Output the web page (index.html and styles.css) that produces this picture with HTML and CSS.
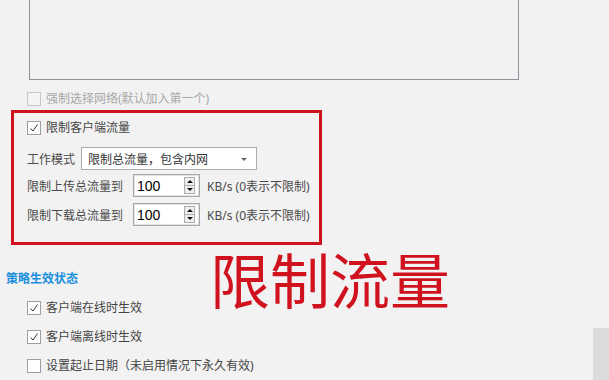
FILE: index.html
```html
<!DOCTYPE html>
<html lang="zh-CN">
<head>
<meta charset="utf-8">
<link rel="stylesheet" href="styles.css">
</head>
<body>
<div class="page">
  <div class="top-box"></div>

  <div class="opt opt-disabled">
    <span class="cb cb-disabled"></span>
    <span>强制选择网络(默认加入第一个)</span>
  </div>

  <div class="redbox">
    <div class="opt">
      <span class="cb"><svg viewBox="0 0 14 14" width="14" height="14"><polyline points="3.5,7.5 6,10 10.5,3.5" fill="none" stroke="#333" stroke-width="1"/></svg></span>
      <span>限制客户端流量</span>
    </div>
    <div class="field field-mode">
      <span class="lbl lbl-mode">工作模式</span>
      <div class="select">
        <span>限制总流量，包含内网</span>
        <span class="caret"></span>
      </div>
    </div>
    <div class="field field-up">
      <span class="lbl lbl-long">限制上传总流量到</span>
      <div class="spin">
        <span class="spin-val">100</span>
        <span class="spin-btns"><span class="sb sb-up"><i class="tri-up"></i></span><span class="sb"><i class="tri-down"></i></span></span>
      </div>
      <span class="unit">KB/s (0表示不限制)</span>
    </div>
    <div class="field field-down">
      <span class="lbl lbl-long">限制下载总流量到</span>
      <div class="spin">
        <span class="spin-val">100</span>
        <span class="spin-btns"><span class="sb sb-up"><i class="tri-up"></i></span><span class="sb"><i class="tri-down"></i></span></span>
      </div>
      <span class="unit">KB/s (0表示不限制)</span>
    </div>
  </div>

  <div class="section-title">策略生效状态</div>

  <div class="opt opt-row">
    <span class="cb"><svg viewBox="0 0 14 14" width="14" height="14"><polyline points="3.5,7.5 6,10 10.5,3.5" fill="none" stroke="#333" stroke-width="1"/></svg></span>
    <span>客户端在线时生效</span>
  </div>
  <div class="opt opt-row">
    <span class="cb"><svg viewBox="0 0 14 14" width="14" height="14"><polyline points="3.5,7.5 6,10 10.5,3.5" fill="none" stroke="#333" stroke-width="1"/></svg></span>
    <span>客户端离线时生效</span>
  </div>
  <div class="opt opt-row">
    <span class="cb"></span>
    <span>设置起止日期（未启用情况下永久有效)</span>
  </div>

  <div class="annotation">限制流量</div>
  <div class="scroll-thumb"></div>
</div>
</body>
</html>
```

FILE: styles.css
```css
html, body {
  margin: 0;
  padding: 0;
  background: #f2f2f2;
}
body {
  font-family: "Noto Sans", "Noto Sans CJK SC", sans-serif;
  font-size: 12px;
  color: #444;
  width: 609px;
  height: 380px;
  overflow: hidden;
}
.page {
  position: relative;
  width: 609px;
  height: 380px;
}
.top-box {
  margin-left: 29px;
  width: 490px;
  height: 80px;
  box-sizing: border-box;
  border: 1px solid #8d9199;
  border-top: 0;
}
.opt {
  display: flex;
  align-items: center;
  gap: 5px;
  height: 14px;
  line-height: 14px;
  padding-left: 27px;
  white-space: nowrap;
}
.opt-disabled {
  margin-top: 12px;
  color: #a8a8a8;
}
.cb {
  display: block;
  width: 14px;
  height: 14px;
  box-sizing: border-box;
  border: 1px solid #9f9f9f;
  background: #fff;
  flex: none;
  position: relative;
}
.cb svg {
  position: absolute;
  left: -1px;
  top: -1px;
}
.cb-disabled {
  border-color: #c6c6c6;
  background: #f4f4f4;
}
.redbox {
  margin-top: 4px;
  margin-left: 11px;
  width: 311px;
  height: 135px;
  box-sizing: border-box;
  border: 3px solid #d0121f;
  padding-top: 8px;
}
.redbox .opt {
  padding-left: 13px;
}
.field {
  display: flex;
  align-items: center;
  padding-left: 13px;
  height: 23px;
  white-space: nowrap;
}
.field-mode { margin-top: 12px; }
.field-up { margin-top: 4px; }
.field-down { margin-top: 6px; }
.lbl { color: #4a4a4a; }
.lbl-mode { margin-right: 6px; }
.lbl-long { margin-right: 10px; }
.select {
  width: 176px;
  height: 23px;
  box-sizing: border-box;
  border: 1px solid #acacac;
  background: #fff;
  display: flex;
  align-items: center;
  justify-content: space-between;
  padding: 0 6px 0 6px;
  color: #333;
}
.caret {
  width: 0;
  height: 0;
  border-left: 3px solid transparent;
  border-right: 3px solid transparent;
  border-top: 3px solid #666;
  margin-right: 3px;
  margin-top: 1px;
}
.spin {
  width: 67px;
  height: 23px;
  box-sizing: border-box;
  border: 1px solid #a9a9a9;
  box-shadow: inset 0 0 0 1px #e2e2e2;
  background: #fff;
  display: flex;
  align-items: center;
  justify-content: space-between;
  padding: 0 4px 0 3px;
  margin-right: 7px;
}
.spin-val {
  font-family: "Liberation Sans", "Noto Sans", sans-serif;
  font-size: 14px;
  color: #000;
}
.spin-btns {
  display: flex;
  flex-direction: column;
  width: 11px;
  height: 17px;
  box-sizing: border-box;
  border: 1px solid #adadad;
  background: #f0f0f0;
}
.sb {
  flex: 1;
  display: flex;
  align-items: center;
  justify-content: center;
}
.sb-up { border-bottom: 1px solid #adadad; }
.tri-up, .tri-down {
  display: block;
  width: 0;
  height: 0;
  border-left: 3px solid transparent;
  border-right: 3px solid transparent;
}
.tri-up { border-bottom: 3px solid #111; }
.tri-down { border-top: 3px solid #111; }
.unit { color: #4a4a4a; }
.section-title {
  margin-top: 26px;
  padding-left: 6px;
  height: 16px;
  line-height: 16px;
  color: #1a8fdc;
  font-weight: bold;
}
.opt-row {
  margin-top: 15px;
  color: #444;
}
.section-title + .opt-row { margin-top: 14px; }
.annotation {
  position: absolute;
  left: 210px;
  top: 248px;
  font-family: "Noto Sans CJK SC", sans-serif;
  font-size: 60px;
  line-height: 1;
  color: #d0121f;
  white-space: nowrap;
}
.scroll-thumb {
  position: absolute;
  right: 0;
  top: 328px;
  width: 16px;
  height: 52px;
  background: #dcdcdc;
}
```
